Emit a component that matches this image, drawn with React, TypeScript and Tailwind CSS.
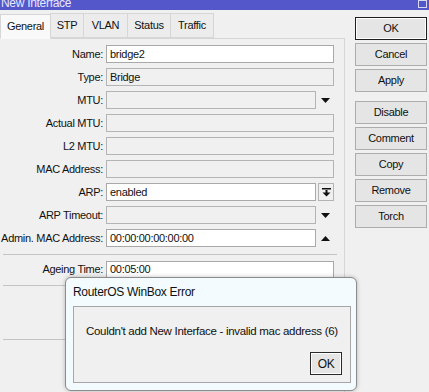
import { ReactNode } from 'react'

const font = { fontFamily: '"Liberation Sans", Arial, sans-serif' }

function DownArrow() {
  return (
    <svg width="9" height="5" viewBox="0 0 9 5">
      <path d="M0 0 H9 L4.5 5 Z" fill="#111" />
    </svg>
  )
}

function UpArrow() {
  return (
    <svg width="9" height="5" viewBox="0 0 9 5">
      <path d="M0 5 H9 L4.5 0 Z" fill="#111" />
    </svg>
  )
}

function PullDown() {
  return (
    <svg width="9" height="9" viewBox="0 0 9 9">
      <rect x="0" y="0" width="9" height="1.5" fill="#111" />
      <rect x="3.5" y="2" width="2" height="3" fill="#111" />
      <path d="M0.5 4.5 H8.5 L4.5 8.5 Z" fill="#111" />
    </svg>
  )
}

type Field = {
  label: string
  value?: string
  white?: boolean
  extra?: 'down' | 'up' | 'pull'
}

const fields: Field[] = [
  { label: 'Name:', value: 'bridge2', white: true },
  { label: 'Type:', value: 'Bridge' },
  { label: 'MTU:', extra: 'down' },
  { label: 'Actual MTU:' },
  { label: 'L2 MTU:' },
  { label: 'MAC Address:' },
  { label: 'ARP:', value: 'enabled', white: true, extra: 'pull' },
  { label: 'ARP Timeout:', extra: 'down' },
  { label: 'Admin. MAC Address:', value: '00:00:00:00:00:00', white: true, extra: 'up' },
]

function Label({ children }: { children: ReactNode }) {
  return (
    <div className="flex w-[106px] shrink-0 justify-end whitespace-nowrap pr-[3px]">{children}</div>
  )
}

function Row({ f }: { f: Field }) {
  return (
    <div className="flex h-[18px] items-center">
      <Label>{f.label}</Label>
      <div className="flex w-[228px] items-center">
        <div
          className={`flex h-[18px] items-center border px-[3px] ${
            f.white ? 'border-[#a9a9a9] bg-white' : 'border-[#b4b4b4] bg-[#f0f0f0]'
          } ${f.extra ? 'w-[210px]' : 'w-[228px]'}`}
        >
          {f.value}
        </div>
        {f.extra === 'pull' && (
          <div className="ml-[2px] flex h-[18px] w-[16px] items-center justify-center border border-[#b4b4b4] bg-[#f0f0f0]">
            <PullDown />
          </div>
        )}
        {f.extra === 'down' && (
          <div className="flex w-[18px] justify-center">
            <DownArrow />
          </div>
        )}
        {f.extra === 'up' && (
          <div className="flex w-[18px] justify-center">
            <UpArrow />
          </div>
        )}
      </div>
    </div>
  )
}

function Btn({ children, primary }: { children: ReactNode; primary?: boolean }) {
  return (
    <div
      className={`flex h-[23px] w-[72px] items-center justify-center bg-[#e5e5e5] ${
        primary ? 'h-[22px] border border-[#1e1e1e] shadow-[inset_0_0_0_1px_#ffffff]' : 'border border-[#adadad]'
      }`}
    >
      {children}
    </div>
  )
}

function Tab({ children, active, w }: { children: ReactNode; active?: boolean; w: string }) {
  return (
    <div
      className={`flex h-[25px] items-center justify-center border border-[#d6d6d6] ${w} ${
        active ? 'z-10 -mb-px border-b-[#f9f9f9] bg-[#f9f9f9]' : '-ml-px bg-[#ececec]'
      }`}
    >
      {children}
    </div>
  )
}

export default function App() {
  return (
    <div
      className="relative h-[392px] w-[429px] overflow-hidden bg-[#f0f0f0] text-[11px] tracking-[-0.3px] text-[#111]"
      style={font}
    >
      {/* title bar */}
      <div className="flex h-[10px] items-start justify-between overflow-hidden bg-[#5457c9]">
        <span className="-mt-[4px] pl-[1px] text-[12px] leading-[14px] text-[#e8e8ff]">New Interface</span>
        <div className="mr-[2px] flex gap-[1px]">
          <div className="h-[8px] w-[9px] border border-[#d8d8f0]" />
        </div>
      </div>

      <div className="flex">
        {/* left panel */}
        <div className="w-[345px] shrink-0">
          <div className="mt-[3px] flex h-[25px] items-end">
            <Tab active w="w-[51px]">General</Tab>
            <Tab w="w-[34px]">STP</Tab>
            <Tab w="w-[45px]">VLAN</Tab>
            <Tab w="w-[44px]">Status</Tab>
            <Tab w="w-[44px]">Traffic</Tab>
          </div>
          <div className="h-[360px] border-r border-t border-[#d6d6d6] pt-[6px]">
            <div className="flex flex-col gap-[5px]">
              {fields.map((f) => (
                <Row key={f.label} f={f} />
              ))}
            </div>
            <div className="ml-[3px] mt-[7px] h-px w-[334px] bg-[#c4c4c4]" />
            <div className="mt-[6px] flex h-[17px] items-center">
              <Label>Ageing Time:</Label>
              <div className="flex h-[17px] w-[228px] items-center border border-[#a9a9a9] bg-white px-[3px]">
                00:05:00
              </div>
            </div>
            <div className="ml-[3px] mt-[7px] h-px w-[334px] bg-[#c4c4c4]" />
            <div className="ml-[3px] mt-[53px] h-px w-[334px] bg-[#c4c4c4]" />
          </div>
        </div>

        {/* buttons */}
        <div className="ml-[10px] mt-[7px] flex flex-col">
          <Btn primary>OK</Btn>
          <div className="mt-[3px] flex flex-col gap-[3px]">
            <Btn>Cancel</Btn>
            <Btn>Apply</Btn>
          </div>
          <div className="mt-[9px] flex flex-col gap-[3px]">
            <Btn>Disable</Btn>
            <Btn>Comment</Btn>
            <Btn>Copy</Btn>
            <Btn>Remove</Btn>
            <Btn>Torch</Btn>
          </div>
        </div>
      </div>

      {/* error dialog */}
      <div className="absolute left-[65px] top-[277px] h-[114px] w-[292px] rounded-[6px] border border-[#8c8c8c] bg-[#f3fbfe] shadow-[0_0_4px_rgba(0,0,0,0.25)]">
        <div className="pl-[7px] pt-[7px] text-[12px] leading-[15px]">RouterOS WinBox Error</div>
        <div className="relative ml-[7px] mt-[6px] h-[77px] w-[278px] border border-[#a6a6a6] bg-[#f0f0f0] text-[11.5px]">
          <div className="whitespace-nowrap pl-[12px] pt-[16px]">Couldn't add New Interface - invalid mac address (6)</div>
          <div className="absolute left-[236px] top-[45px] flex h-[23px] w-[32px] items-center justify-center border border-[#2a2a2a] bg-[#e5e5e5] text-[12px] shadow-[inset_0_0_0_1px_#ffffff]">
            OK
          </div>
        </div>
      </div>
    </div>
  )
}
